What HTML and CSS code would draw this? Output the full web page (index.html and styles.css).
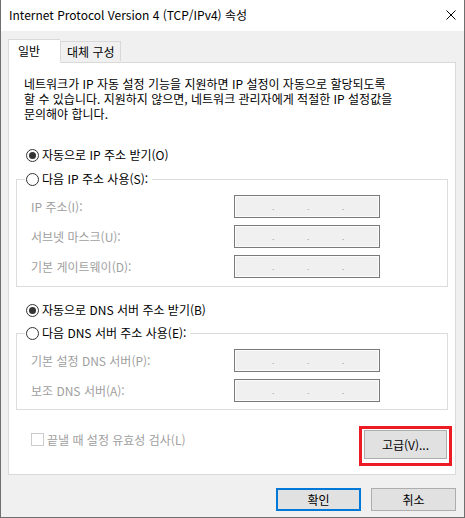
FILE: index.html
```html
<!DOCTYPE html>
<html lang="ko">
<head>
<meta charset="utf-8">
<title>Internet Protocol Version 4 (TCP/IPv4) 속성</title>
<link rel="stylesheet" href="styles.css">
</head>
<body>
<div class="window">
  <div class="titlebar">
    <span class="title">Internet Protocol Version 4 (TCP/IPv4) 속성</span>
    <svg class="close" width="10" height="10" viewBox="0 0 10 10"><path d="M0.5 0.5L9.5 9.5M9.5 0.5L0.5 9.5" stroke="#000" stroke-width="1" fill="none"/></svg>
  </div>
  <div class="body">
    <div class="tabs">
      <div class="tab active">일반</div>
      <div class="tab">대체 구성</div>
    </div>
    <div class="panel">
      <div class="desc">
        <div class="line">네트워크가 IP 자동 설정 기능을 지원하면 IP 설정이 자동으로 할당되도록</div>
        <div class="line">할 수 있습니다. 지원하지 않으면, 네트워크 관리자에게 적절한 IP 설정값을</div>
        <div class="line">문의해야 합니다.</div>
      </div>
      <div class="radio-row first"><span class="radio checked"></span><span>자동으로 IP 주소 받기(O)</span></div>
      <fieldset class="group g1">
        <legend><span class="radio"></span><span>다음 IP 주소 사용(S):</span></legend>
        <div class="field"><span class="label">IP 주소(I):</span><span class="ip"><i>.</i><i>.</i><i>.</i></span></div>
        <div class="field"><span class="label">서브넷 마스크(U):</span><span class="ip"><i>.</i><i>.</i><i>.</i></span></div>
        <div class="field"><span class="label">기본 게이트웨이(D):</span><span class="ip"><i>.</i><i>.</i><i>.</i></span></div>
      </fieldset>
      <div class="radio-row second"><span class="radio checked"></span><span>자동으로 DNS 서버 주소 받기(B)</span></div>
      <fieldset class="group g2">
        <legend><span class="radio"></span><span>다음 DNS 서버 주소 사용(E):</span></legend>
        <div class="field"><span class="label">기본 설정 DNS 서버(P):</span><span class="ip"><i>.</i><i>.</i><i>.</i></span></div>
        <div class="field"><span class="label">보조 DNS 서버(A):</span><span class="ip"><i>.</i><i>.</i><i>.</i></span></div>
      </fieldset>
      <div class="footer">
        <div class="check-row"><span class="checkbox"></span><span>끝낼 때 설정 유효성 검사(L)</span></div>
        <div class="highlight"><button class="btn adv">고급(V)...</button></div>
      </div>
    </div>
    <div class="actions">
      <button class="btn ok">확인</button>
      <button class="btn">취소</button>
    </div>
  </div>
</div>
</body>
</html>
```
FILE: styles.css
```css
* { box-sizing: border-box; }
html, body { margin: 0; padding: 0; }
body {
  width: 465px;
  height: 518px;
  font-family: "Noto Sans CJK KR", "Noto Sans", sans-serif;
  font-size: 12px;
  color: #000;
  background: #fff;
}
.window {
  width: 465px;
  height: 518px;
  border: 1px solid #6f6f6f;
  border-top: none;
  display: flex;
  flex-direction: column;
}
.titlebar {
  height: 31px;
  background: #fff;
  display: flex;
  align-items: center;
  justify-content: space-between;
  padding: 0 8px 0 8px;
}
.title { line-height: 16px; margin-top: -1px; }
.close { margin-right: 0; margin-top: -1px; }
.body {
  flex: 1;
  background: #f0f0f0;
  display: flex;
  flex-direction: column;
  padding: 7px 8px 0 7px;
}
.tabs {
  display: flex;
  align-items: flex-end;
  height: 24px;
  position: relative;
  z-index: 1;
}
.tab {
  height: 20px;
  padding: 0 5px;
  border: 1px solid #d9d9d9;
  border-bottom: none;
  background: #f0f0f0;
  line-height: 19px;
  margin-bottom: 1px;
}
.tab.active {
  height: 24px;
  background: #fff;
  width: 52px;
  padding: 0 0 0 9px;
  line-height: 22px;
  margin-bottom: -1px;
  border-right: none;
}
.tab:not(.active) { width: 61px; padding-left: 6px; }
.panel {
  height: 413px;
  background: #fff;
  border: 1px solid #d9d9d9;
  display: flex;
  flex-direction: column;
}
.desc {
  margin: 13px 0 0 15px;
}
.desc .line {
  height: 15px;
  line-height: 15px;
  white-space: nowrap;
}
.radio-row, legend {
  display: flex;
  align-items: center;
  height: 16px;
  line-height: 16px;
}
.radio-row { padding-left: 17px; }
.radio-row.first { margin-top: 26px; }
.radio-row.second { margin-top: 15px; }
.radio {
  width: 13px;
  height: 13px;
  border: 1px solid #333;
  border-radius: 50%;
  background: #fff;
  margin-right: 3px;
  position: relative;
  flex: none;
}
.radio.checked::after {
  content: "";
  position: absolute;
  left: 2px;
  top: 2px;
  width: 7px;
  height: 7px;
  border-radius: 50%;
  background: #333;
}
.group {
  margin: 8px 7px 0 7px;
  padding: 0 0 9px 8px;
  border: 1px solid #dcdcdc;
  min-width: 0;
}
.g2 { margin-top: 7px; padding-bottom: 8px; }
.group legend {
  padding: 0 4px 0 1px;
}
.field {
  display: flex;
  align-items: center;
  height: 22px;
  margin-top: 8px;
  color: #a0a0a0;
}
.label { width: 209px; padding-left: 6px; }
.ip {
  width: 146px;
  height: 23px;
  border: 1px solid #7a7a7a;
  box-shadow: inset 0 0 0 1px #fbfbfb;
  background: #f0f0f0;
  display: flex;
  padding-left: 37px;
}
.ip i {
  font-style: normal;
  width: 35px;
  font-size: 8px;
  line-height: 24px;
  color: #6d6d6d;
  font-family: "Liberation Sans", sans-serif;
}
.footer {
  display: flex;
  justify-content: space-between;
  align-items: flex-start;
  padding: 16px 3px 0 22px;
}
.check-row {
  display: flex;
  align-items: center;
  height: 16px;
  margin-top: 5px;
  color: #a0a0a0;
}
.checkbox {
  width: 13px;
  height: 13px;
  border: 1px solid #cccccc;
  background: #fff;
  margin-right: 3px;
}
.highlight {
  border: 3px solid #ed1c24;
  padding: 1px 2px 4px 2px;
}
.btn {
  font-family: "Noto Sans CJK KR", "Noto Sans", sans-serif;
  font-size: 12px;
  color: #000;
  background: #e1e1e1;
  border: 1px solid #adadad;
  padding: 0;
  margin: 0;
  width: 85px;
  height: 23px;
  line-height: 20px;
}
.btn.adv { width: 83px; height: 29px; }
.actions {
  display: flex;
  justify-content: flex-end;
  gap: 10px;
  margin-top: 13px;
}
.btn.ok { border: 2px solid #0078d7; }
```
